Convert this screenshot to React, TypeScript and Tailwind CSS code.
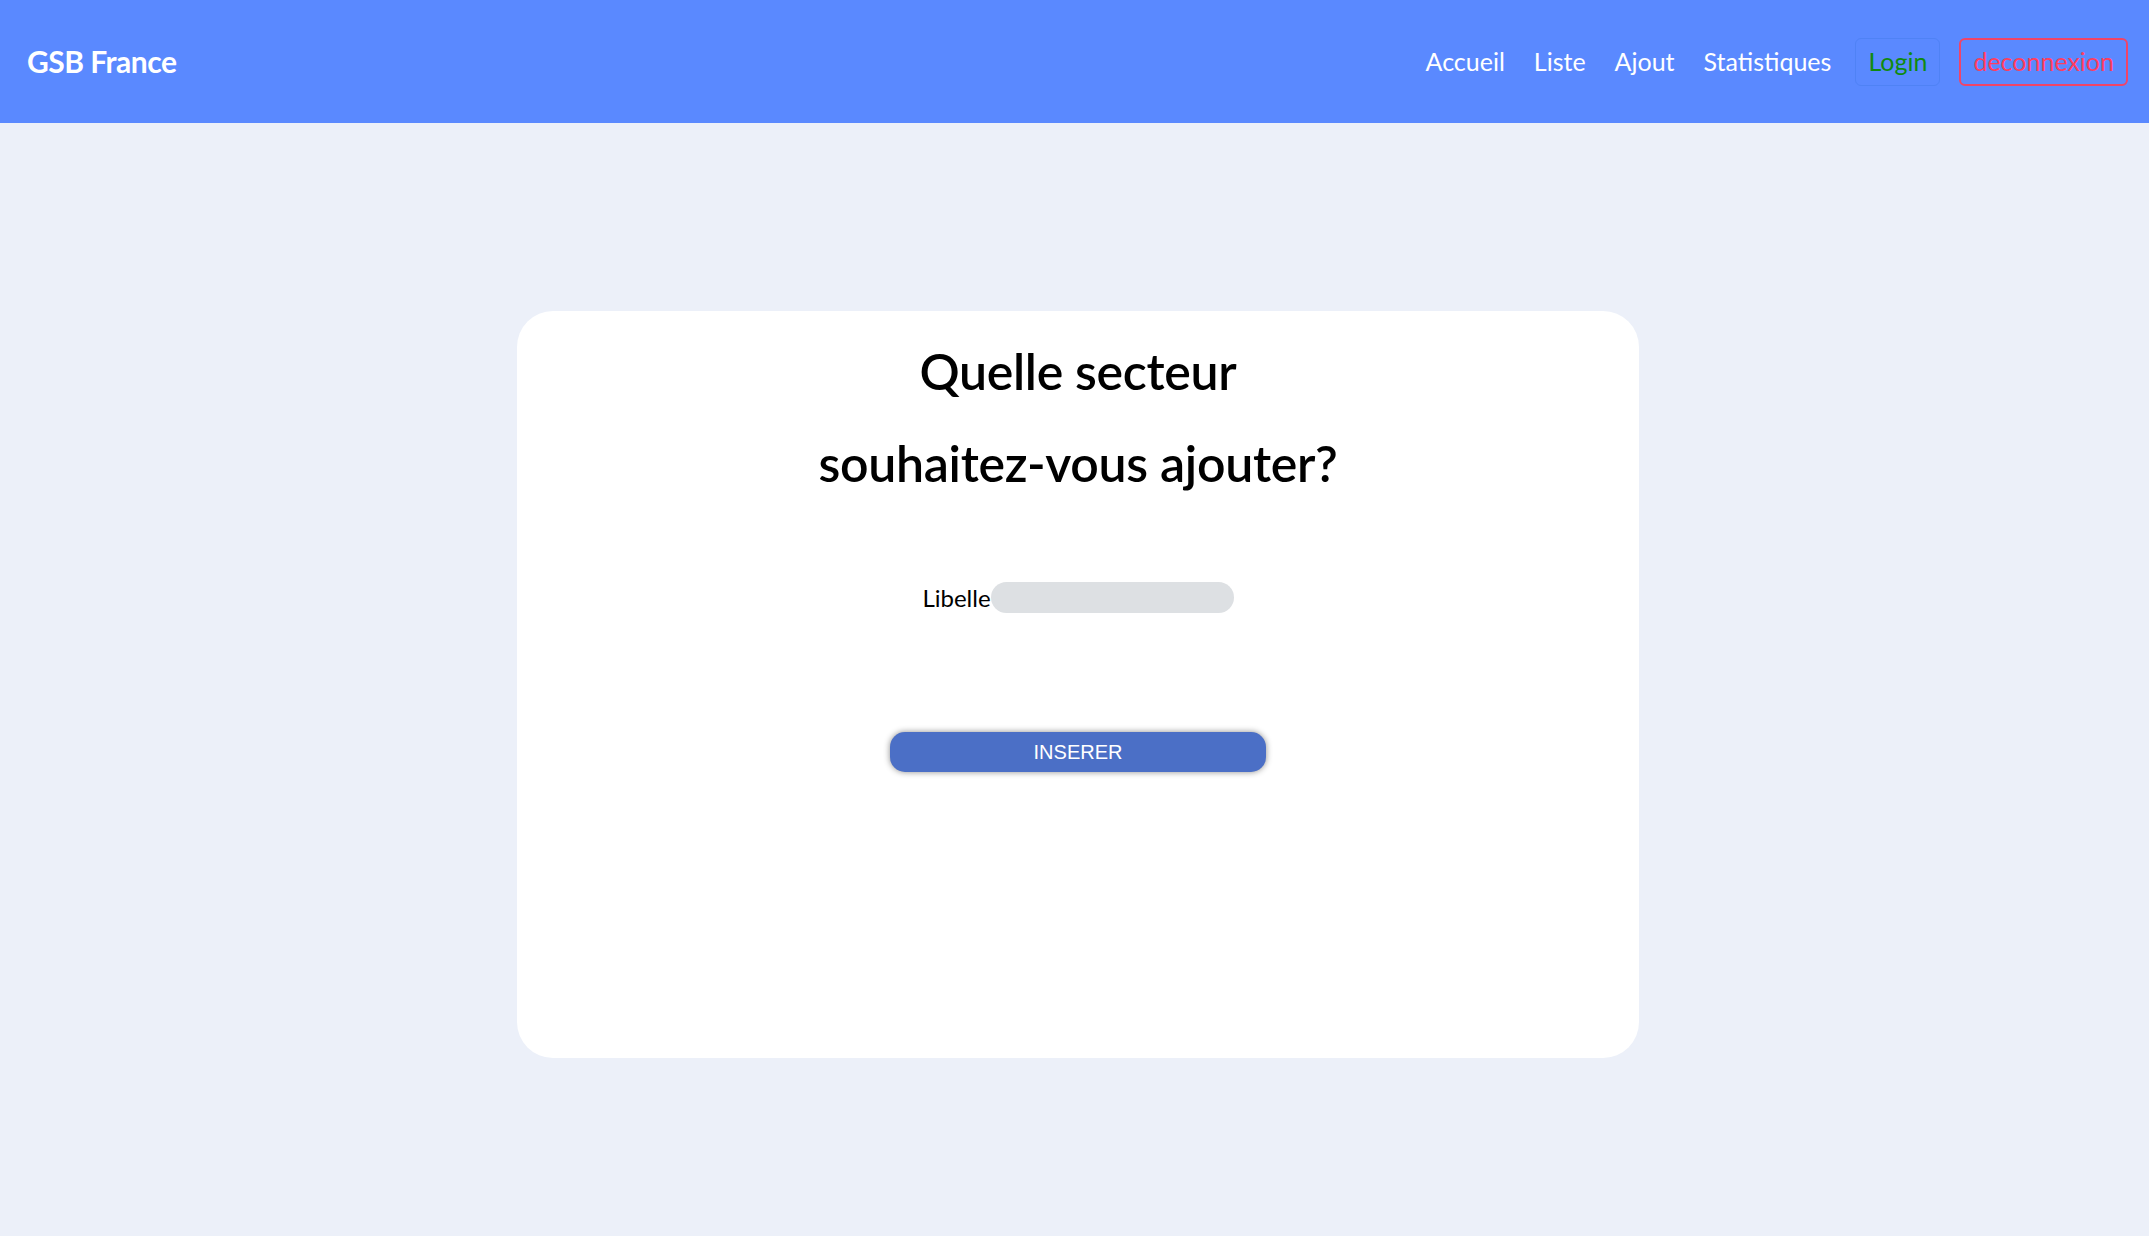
const App = () => {
  const links = ["Accueil", "Liste", "Ajout", "Statistiques"];
  return <div className="min-h-screen bg-[#ecf0f9] font-['Lato',sans-serif]">
      {/* Navbar */}
      <nav className="h-[123px] bg-[#5a89ff] flex items-center justify-between pl-[27px] pr-[21px]">
        <a className="text-white text-[30px] font-bold tracking-[-0.5px]">GSB France</a>
        <div className="flex items-center">
          {links.map(l => <a key={l} className="text-white text-[25px] mr-[29px]">{l}</a>)}
          <button className="ml-[-5px] h-[48px] px-[12px] rounded-[6px] border border-[#4f82f5] text-[#108a10] text-[25px]">
            Login
          </button>
          <button className="ml-[19px] h-[48px] px-[12px] rounded-[6px] border-2 border-[#f04468] text-[#ff3d60] text-[25px]">
            deconnexion
          </button>
        </div>
      </nav>

      {/* Card */}
      <div className="pt-[188px] pb-[178px] flex justify-center pl-[7px]">
        <div className="w-[1122px] h-[747px] bg-white rounded-[36px] pt-[14px] flex flex-col items-center">
          <h1 className="text-[50px] leading-[92px] font-semibold text-black text-center tracking-[-0.3px]">
            Quelle secteur
            <br />
            souhaitez-vous ajouter?
          </h1>
          <div className="mt-[73px] h-[31px] flex items-center">
            <label className="text-[24px] leading-none text-black">Libelle</label>
            <input className="w-[243px] h-[31px] rounded-full bg-[#dde0e3] outline-none" />
          </div>
          <button className="mt-[119px] w-[376px] h-[40px] rounded-[15px] bg-[#4b6fc6] text-white text-[20px] font-['Liberation_Sans',sans-serif] shadow-[0_0_6px_rgba(0,0,0,0.45)]">
            INSERER
          </button>
        </div>
      </div>
    </div>;
};
export default App;
